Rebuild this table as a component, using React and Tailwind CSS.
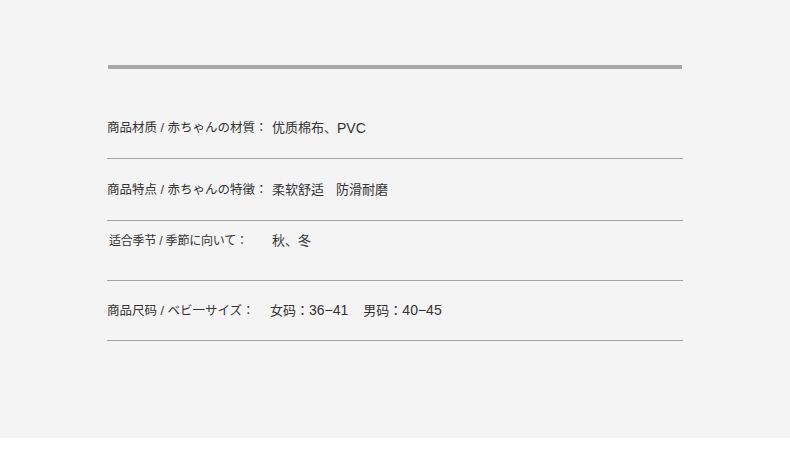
const FONT = 'font-["Liberation_Sans","Noto_Sans_CJK_JP",sans-serif]'

function SpecRow({ label, labelWidth, labelClass = 'text-[12.5px]', className, children }) {
  return (
    <div className={`flex items-center border-b border-[#a3a3a3] leading-5 ${className}`}>
      <span className={`shrink-0 whitespace-nowrap ${labelClass}`} style={{ width: labelWidth }}>
        {label}
      </span>
      <span className="flex items-center whitespace-nowrap">{children}</span>
    </div>
  )
}

export default function App() {
  return (
    <div className={`h-[438px] w-full bg-[#f4f4f4] ${FONT} text-[13px] text-[#333]`}>
      <div className="ml-[107px] w-[576px] pt-[65px]">
        <div className="ml-px h-[4px] w-[574px] bg-[#a8a8a8]" />

        <SpecRow label="商品材质 / 赤ちゃんの材質：" labelWidth={165} className="pt-[49px] pb-[20px]">
          优质棉布、<span className="text-[14px]">PVC</span>
        </SpecRow>

        <SpecRow label="商品特点 / 赤ちゃんの特徵：" labelWidth={165} className="pt-[21px] pb-[20px]">
          <span>柔软舒适</span>
          <span className="ml-[12px]">防滑耐磨</span>
        </SpecRow>

        <SpecRow
          label="适合季节 / 季節に向いて："
          labelWidth={165}
          labelClass="pl-[2px] text-[12px] tracking-[-0.2px]"
          className="pt-[10px] pb-[29px]"
        >
          秋、冬
        </SpecRow>

        <SpecRow label="商品尺码 / ベビ一サイズ：" labelWidth={163} className="pt-[19px] pb-[19px]">
          <span>
            女码：<span className="text-[14px]">36−41</span>
          </span>
          <span className="ml-[15px]">
            男码：<span className="text-[14px]">40−45</span>
          </span>
        </SpecRow>
      </div>
    </div>
  )
}
